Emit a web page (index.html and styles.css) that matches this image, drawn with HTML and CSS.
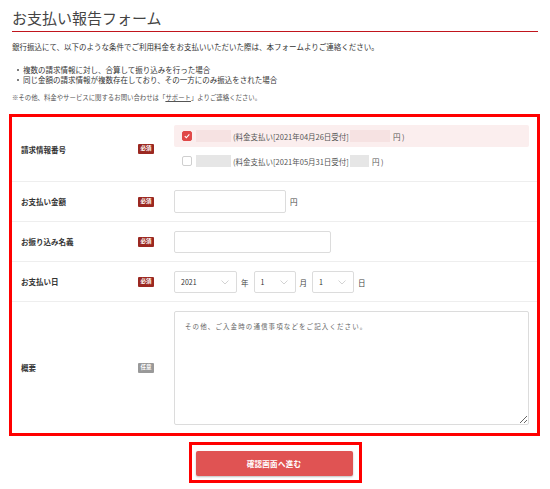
FILE: index.html
```html
<!DOCTYPE html>
<html lang="ja">
<head>
<meta charset="utf-8">
<title>お支払い報告フォーム</title>
<link rel="stylesheet" href="styles.css">
</head>
<body>
<div class="page">
  <h1 class="title">お支払い報告フォーム</h1>
  <p class="lead">銀行振込にて、以下のような条件でご利用料金をお支払いいただいた際は、本フォームよりご連絡ください。</p>
  <ul class="cases">
    <li>複数の請求情報に対し、合算して振り込みを行った場合</li>
    <li>同じ金額の請求情報が複数存在しており、その一方にのみ振込をされた場合</li>
  </ul>
  <p class="note">※その他、料金やサービスに関するお問い合わせは「<a class="link" href="#">サポート</a>」よりご連絡ください。</p>

  <form class="form-box">
    <div class="row row-invoice">
      <div class="label">請求情報番号</div>
      <div class="badge-cell"><span class="badge req">必須</span></div>
      <div class="field options">
        <label class="option checked">
          <span class="check on"><svg viewBox="0 0 10 10" width="10" height="10"><path d="M2.2 5.2 L4.2 7.2 L7.9 2.9" fill="none" stroke="#fff" stroke-width="1.4"/></svg></span>
          <span class="mask pink w35"></span>
          <span class="opt-text">(料金支払い[2021年04月26日受付]</span>
          <span class="mask pink w40"></span>
          <span class="opt-text">円 )</span>
        </label>
        <label class="option">
          <span class="check"></span>
          <span class="mask gray w35"></span>
          <span class="opt-text">(料金支払い[2021年05月31日受付]</span>
          <span class="mask gray w19"></span>
          <span class="opt-text">円 )</span>
        </label>
      </div>
    </div>

    <div class="row">
      <div class="label">お支払い金額</div>
      <div class="badge-cell"><span class="badge req">必須</span></div>
      <div class="field inline">
        <input class="input amount" type="text">
        <span class="unit">円</span>
      </div>
    </div>

    <div class="row row-name">
      <div class="label">お振り込み名義</div>
      <div class="badge-cell"><span class="badge req">必須</span></div>
      <div class="field inline">
        <input class="input name" type="text">
      </div>
    </div>

    <div class="row row-date">
      <div class="label">お支払い日</div>
      <div class="badge-cell"><span class="badge req">必須</span></div>
      <div class="field inline">
        <span class="select year"><span class="sel-val">2021</span><svg class="chev" viewBox="0 0 8 5" width="8" height="5"><path d="M0.5 0.5 L4 4 L7.5 0.5" fill="none" stroke="#c8c8c8" stroke-width="0.8"/></svg></span>
        <span class="unit">年</span>
        <span class="select small"><span class="sel-val">1</span><svg class="chev" viewBox="0 0 8 5" width="8" height="5"><path d="M0.5 0.5 L4 4 L7.5 0.5" fill="none" stroke="#c8c8c8" stroke-width="0.8"/></svg></span>
        <span class="unit">月</span>
        <span class="select small"><span class="sel-val">1</span><svg class="chev" viewBox="0 0 8 5" width="8" height="5"><path d="M0.5 0.5 L4 4 L7.5 0.5" fill="none" stroke="#c8c8c8" stroke-width="0.8"/></svg></span>
        <span class="unit">日</span>
      </div>
    </div>

    <div class="row row-memo">
      <div class="label">概要</div>
      <div class="badge-cell"><span class="badge opt">任意</span></div>
      <div class="field">
        <textarea class="memo" placeholder="その他、ご入金時の通信事項などをご記入ください。"></textarea>
      </div>
    </div>
  </form>

  <div class="submit-wrap">
    <div class="submit-frame">
      <button class="submit" type="button">確認画面へ進む</button>
    </div>
  </div>
</div>
</body>
</html>
```

FILE: styles.css
```css
* { box-sizing: border-box; }

html, body {
  margin: 0;
  padding: 0;
  background: #fff;
}

body {
  font-family: "Noto Sans CJK JP", "Noto Sans", sans-serif;
  color: #333;
  font-size: 7.5px;
}

.page {
  padding: 0 12px;
}

.title {
  margin: 0;
  padding-top: 8px;
  padding-bottom: 3px;
  font-size: 15px;
  line-height: 20px;
  font-weight: 400;
  color: #444;
  border-bottom: 1px solid #c1151d;
}

.lead {
  margin: 9px 0 0;
  line-height: 12px;
}

.cases {
  list-style: none;
  margin: 12px 0 0;
  padding: 0 0 0 11px;
}

.cases li {
  position: relative;
  line-height: 10px;
}

.cases li::before {
  content: "";
  position: absolute;
  left: -6px;
  top: 4px;
  width: 2px;
  height: 2px;
  border-radius: 50%;
  background: #555;
}

.note {
  margin: 8px 0 0;
  font-size: 6.4px;
  line-height: 10px;
  color: #555;
}

.link {
  color: #555;
  text-decoration: underline;
}

/* form */
.form-box {
  margin: 11px -2px 0 -3px;
  border: 3px solid #ff0000;
  background: #fff;
}

.row {
  display: grid;
  grid-template-columns: 126px 36px 1fr;
  align-items: center;
  border-bottom: 1px solid #eeeeee;
}

.row:last-child {
  border-bottom: none;
}

.label {
  padding-left: 9px;
  font-weight: 700;
  color: #333;
  font-size: 7.5px;
}

.badge-cell {
  display: flex;
  align-items: center;
}

.badge {
  display: inline-flex;
  align-items: center;
  justify-content: center;
  width: 16px;
  height: 10px;
  border-radius: 1px;
  font-size: 5.5px;
  font-weight: 700;
  color: #fff;
  line-height: 1;
}

.badge.req { background: #9b2821; }
.badge.opt { background: #999; }

.field {
  padding: 8px 8px 8px 0;
}

.inline {
  display: flex;
  align-items: center;
}

/* invoice options */
.options {
  padding-top: 8px;
  padding-bottom: 9px;
  display: flex;
  flex-direction: column;
  gap: 3px;
}

.option {
  display: flex;
  align-items: center;
  height: 22px;
  padding-left: 8px;
  border-radius: 2px;
  color: #555;
}

.option.checked {
  background: #fbeeee;
}

.check {
  width: 10px;
  height: 10px;
  border: 1px solid #cfcfcf;
  border-radius: 2px;
  background: #fff;
  margin-right: 4px;
  display: flex;
  align-items: center;
  justify-content: center;
  flex: none;
}

.check.on {
  background: #e04848;
  border-color: #e04848;
}

.check svg { display: block; }

.mask {
  display: inline-block;
  height: 12px;
  flex: none;
}

.mask.pink { background: #f6e2e2; }
.mask.gray { background: #e6e6e6; }
.w35 { width: 35px; margin-right: 2px; }
.w40 { width: 40px; margin-left: 1px; margin-right: 3px; }
.w19 { width: 19px; margin-left: 1px; margin-right: 3px; }

.opt-text {
  font-size: 7.5px;
  white-space: nowrap;
}

/* inputs */
.input {
  height: 23px;
  border: 1px solid #dcdcdc;
  border-radius: 2px;
  background: #fff;
  padding: 0 6px;
  font: inherit;
}

.input.amount { width: 112px; }

.row-name .field { padding-top: 9px; }
.input.name { width: 157px; height: 22px; }

.unit {
  margin: 0 5px 0 4px;
  color: #444;
  font-size: 7.5px;
}

.row-date .field { padding-top: 9px; }

.select {
  position: relative;
  display: inline-flex;
  align-items: center;
  height: 22px;
  border: 1px solid #dcdcdc;
  border-radius: 2px;
  padding-left: 6px;
  background: #fff;
  font-size: 7px;
  color: #333;
}

.select.year { width: 63px; }
.select.small { width: 42px; }

.chev {
  position: absolute;
  right: 7px;
  top: 8px;
}

/* memo */
.row-memo .field {
  padding-top: 9px;
  padding-bottom: 8px;
}

.memo {
  display: block;
  width: 100%;
  height: 114px;
  border: 1px solid #dcdcdc;
  border-radius: 2px;
  padding: 9px 10px;
  font-family: inherit;
  font-size: 6.5px;
  letter-spacing: 1.1px;
  resize: vertical;
}

.memo::placeholder {
  color: #666;
}

/* submit */
.submit-wrap {
  display: flex;
  justify-content: center;
  margin-top: 6px;
}

.submit-frame {
  border: 3px solid #ff0000;
  padding: 6px 6px 4px 4px;
}

.submit {
  display: block;
  width: 157px;
  height: 25px;
  border: none;
  border-radius: 2px;
  background: #e05353;
  box-shadow: 0 1px 2px rgba(0, 0, 0, 0.25);
  color: #fff;
  font-family: inherit;
  font-size: 7.5px;
  font-weight: 700;
  letter-spacing: 0.3px;
}
```
